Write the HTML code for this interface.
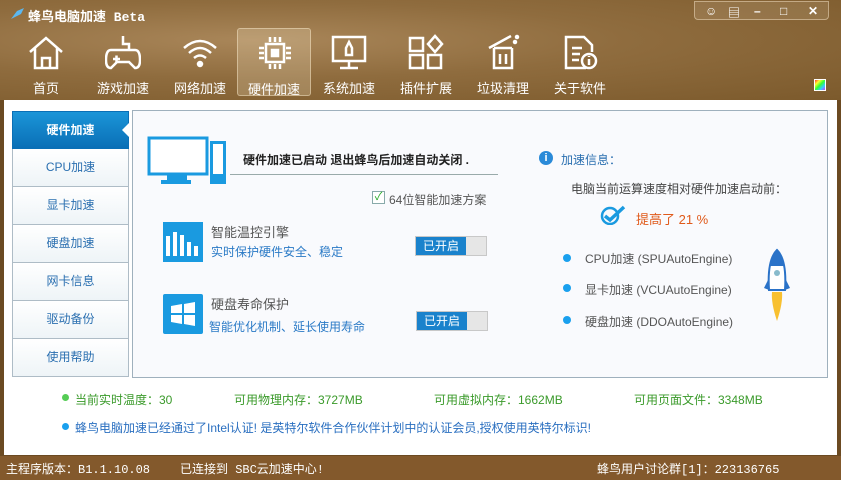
<!DOCTYPE html>
<html><head><meta charset="utf-8"><style>
*{margin:0;padding:0;box-sizing:border-box}
body{width:841px;height:480px;overflow:hidden;background:#6b4a22;font-family:"Liberation Sans","Noto Sans CJK SC",sans-serif;position:relative}
.hdr{position:absolute;left:0;top:0;width:841px;height:100px;background:radial-gradient(ellipse at 30% 40%,#a98659 0%,#8f6c3e 45%,#7c5a2c 100%);}
.title{position:absolute;left:28px;top:6px;color:#fff;font-size:13px;font-weight:bold;font-family:"Liberation Mono","Noto Sans CJK SC",monospace}
.nav{position:absolute;top:28px;width:74px;height:68px;text-align:center;color:#fff;font-size:13px}
.nav svg{position:absolute;left:19px;top:6px}
.nav span{position:absolute;left:0;right:0;top:50px}
.act{background:rgba(255,240,210,.22);border:1px solid rgba(255,240,210,.45);border-radius:3px}
.wb{position:absolute;left:694px;top:1px;width:135px;height:19px;border:1px solid rgba(255,240,210,.45);border-radius:0 0 4px 4px;background:rgba(255,240,210,.12);color:#fff;font-size:12px}
.wb i{position:absolute;top:2px;font-style:normal;font-weight:bold}
.main{position:absolute;left:4px;top:100px;width:833px;height:355px;background:#fff}
.side{position:absolute;left:12px;top:111px;width:117px}
.side div{height:38px;border:1px solid #aebcc6;border-top:none;background:linear-gradient(#fff,#eef4f7);color:#2a6fb0;font-size:12px;text-align:center;line-height:37px}
.side div.on{background:linear-gradient(#1b95d8,#0a6fb6);color:#fff;font-weight:bold;border-color:#0a6fb6;position:relative}
.side div.on:after{content:"";position:absolute;right:-1px;top:11px;border:7px solid transparent;border-right-color:#fff}
.panel{position:absolute;left:132px;top:110px;width:696px;height:268px;border:1px solid #9fb0bd;background:#f9fafd}
.t{position:absolute;font-size:12px;white-space:nowrap}
.tog{position:absolute;width:72px;height:20px;border:1px solid #c8c8c8;background:#e6e6e6}
.tog b{position:absolute;left:0;top:0;width:50px;height:18px;background:#1a82cc;color:#fff;font-weight:normal;font-size:12px;text-align:center;line-height:18px}
.dot{position:absolute;width:8px;height:8px;border-radius:4px;background:#1aa0ee}
.status{position:absolute;left:0;top:456px;width:841px;height:24px;background:#83592c;color:#fff;font-size:12px;font-family:"Liberation Mono","Noto Sans CJK SC",monospace}
</style></head><body>
<div class="hdr"></div>
<svg style="position:absolute;left:9px;top:7px" width="16" height="14"><path d="M2 12 L8 4 L15 1 L12 7 Z" fill="#5cb8f0"/></svg>
<div class="title">蜂鸟电脑加速 Beta</div>
<div class="wb"><i style="left:10px">☺</i><i style="left:33px">▤</i><i style="left:59px">–</i><i style="left:85px">□</i><i style="left:113px">✕</i></div>

<div class="nav" style="left:9px"><svg width="36" height="36" fill="none" stroke="#fff" stroke-width="2.5"><path d="M2 18 L18 4 L34 18 M7 14 V34 H29 V14 M14 34 V24 H22 V34"/></svg><span>首页</span></div>
<div class="nav" style="left:86px"><svg width="36" height="36" fill="none" stroke="#fff" stroke-width="2.5"><path d="M18 2 V10 H24 V16 M6 16 H30 Q35 16 35 26 Q35 34 30 34 L24 28 H12 L6 34 Q1 34 1 26 Q1 16 6 16Z M8 25 H15 M11.5 21.5 V28.5"/></svg><span>游戏加速</span></div>
<div class="nav" style="left:163px"><svg width="36" height="36" fill="none" stroke="#fff" stroke-width="2.5"><path d="M2 14 Q18 0 34 14 M7 19 Q18 9 29 19 M12 24 Q18 19 24 24"/><circle cx="18" cy="30" r="2" fill="#fff"/></svg><span>网络加速</span></div>
<div class="nav act" style="left:237px"><svg width="36" height="36" fill="none" stroke="#fff" stroke-width="2.5"><rect x="9" y="9" width="18" height="18"/><rect x="15" y="15" width="6" height="6" fill="#fff"/><path d="M13 2V7M18 2V7M23 2V7M13 29V34M18 29V34M23 29V34M2 13H7M2 18H7M2 23H7M29 13H34M29 18H34M29 23H34"/></svg><span>硬件加速</span></div>
<div class="nav" style="left:312px"><svg width="36" height="36" fill="none" stroke="#fff" stroke-width="2.5"><rect x="2" y="3" width="32" height="24"/><path d="M18 27V33M9 34H27M18 8 L15 14V21H21V14Z"/></svg><span>系统加速</span></div>
<div class="nav" style="left:389px"><svg width="36" height="36" fill="none" stroke="#fff" stroke-width="2.5"><rect x="2" y="4" width="13" height="13"/><rect x="2" y="21" width="13" height="13"/><rect x="20" y="21" width="13" height="13"/><path d="M27 2 L34 10 L27 18 L20 10Z"/></svg><span>插件扩展</span></div>
<div class="nav" style="left:466px"><svg width="36" height="36" fill="none" stroke="#fff" stroke-width="2.5"><path d="M4 14 L26 2 M9 14 H27 M9 14 V34 H27 V14 M15 20V30M21 20V30"/><circle cx="30" cy="8" r="1" fill="#fff"/><circle cx="32" cy="3" r="1" fill="#fff"/></svg><span>垃圾清理</span></div>
<div class="nav" style="left:543px"><svg width="36" height="36" fill="none" stroke="#fff" stroke-width="2.5"><path d="M24 34 H4 V3 H22 L30 11 V18 M10 14H20M10 20H18M10 26H17"/><circle cx="27" cy="27" r="7"/><path d="M27 25V31M27 22V23"/></svg><span>关于软件</span></div>
<div style="position:absolute;left:814px;top:79px;width:12px;height:12px;border:1px solid #fff;background:linear-gradient(135deg,#f33,#ff3,#3f3,#3cf,#c3f)"></div>

<div class="main"></div>
<div class="side"><div class="on" style="border-top:1px solid #0a6fb6">硬件加速</div><div>CPU加速</div><div>显卡加速</div><div>硬盘加速</div><div>网卡信息</div><div>驱动备份</div><div>使用帮助</div></div>
<div class="panel"></div>
<svg style="position:absolute;left:147px;top:136px" width="82" height="52"><rect x="2" y="2" width="58" height="36" fill="#fff" stroke="#1a9ae0" stroke-width="3"/><rect x="20" y="39" width="20" height="5" fill="#1a9ae0"/><rect x="14" y="44" width="30" height="4" fill="#1a9ae0"/><rect x="63" y="5" width="16" height="43" fill="#1a9ae0"/><rect x="66" y="8" width="10" height="30" fill="#fff"/></svg>
<div class="t" style="left:243px;top:151px;font-weight:bold;color:#222">硬件加速已启动 退出蜂鸟后加速自动关闭 .</div>
<div style="position:absolute;left:230px;top:174px;width:268px;height:1px;background:#9aa"></div>
<div style="position:absolute;left:372px;top:191px;width:13px;height:13px;border:1px solid #8aa;background:#fff;color:#2a2;font-size:11px;line-height:11px;text-align:center">✓</div>
<div class="t" style="left:389px;top:191px;color:#555">64位智能加速方案</div>
<svg style="position:absolute;left:163px;top:222px" width="40" height="40"><rect width="40" height="40" fill="#1a9ae0"/><path d="M5 34V14M12 34V10M19 34V13M26 34V20M33 34V24" stroke="#fff" stroke-width="4"/></svg>
<div class="t" style="left:211px;top:222px;color:#555;font-size:13px">智能温控引擎</div>
<div class="t" style="left:211px;top:243px;color:#2a7ac6">实时保护硬件安全、稳定</div>
<div class="tog" style="left:415px;top:236px"><b>已开启</b></div>
<svg style="position:absolute;left:163px;top:294px" width="40" height="40"><rect width="40" height="40" fill="#1a9ae0" rx="2"/><path d="M8 12L19 10V19H8ZM21 10L32 8V19H21ZM8 21H19V30L8 28ZM21 21H32V32L21 30Z" fill="#fff"/></svg>
<div class="t" style="left:211px;top:294px;color:#555;font-size:13px">硬盘寿命保护</div>
<div class="t" style="left:209px;top:318px;color:#2a7ac6">智能优化机制、延长使用寿命</div>
<div class="tog" style="left:416px;top:311px"><b>已开启</b></div>

<div style="position:absolute;left:539px;top:151px;width:14px;height:14px;border-radius:7px;background:#2a8ad8;color:#fff;font-size:11px;text-align:center;line-height:14px;font-weight:bold">i</div>
<div class="t" style="left:561px;top:151px;color:#2a6fb0">加速信息：</div>
<div class="t" style="left:571px;top:180px;color:#444">电脑当前运算速度相对硬件加速启动前：</div>
<svg style="position:absolute;left:600px;top:205px" width="26" height="20"><circle cx="10" cy="11" r="8" fill="none" stroke="#1a9ae0" stroke-width="2.5"/><path d="M5 11 L10 15 L24 2" fill="none" stroke="#1a9ae0" stroke-width="3.5"/></svg>
<div class="t" style="left:636px;top:209px;color:#e05a1a;font-size:13px">提高了 21 %</div>
<div class="dot" style="left:563px;top:254px"></div><div class="t" style="left:585px;top:250px;color:#555">CPU加速 (SPUAutoEngine)</div>
<div class="dot" style="left:563px;top:284px"></div><div class="t" style="left:585px;top:281px;color:#555">显卡加速 (VCUAutoEngine)</div>
<div class="dot" style="left:563px;top:316px"></div><div class="t" style="left:585px;top:313px;color:#555">硬盘加速 (DDOAutoEngine)</div>
<svg style="position:absolute;left:762px;top:248px" width="30" height="78"><path d="M15 73 Q9 55 10 44 H20 Q21 55 15 73Z" fill="#f8c030"/><path d="M15 2 Q5 12 7 42 H23 Q25 12 15 2Z" fill="#fff" stroke="#2a72c8" stroke-width="2"/><path d="M15 2 Q9 8 8 18 H22 Q21 8 15 2Z" fill="#2a72c8"/><path d="M7 30 L2 40 L7 42ZM23 30 L28 40 L23 42Z" fill="#2a72c8"/><circle cx="15" cy="25" r="3" fill="#8bc"/></svg>

<div style="position:absolute;left:62px;top:394px;width:7px;height:7px;border-radius:4px;background:#5c5"></div>
<div class="t" style="left:75px;top:391px;color:#3a9a2a">当前实时温度：30</div>
<div class="t" style="left:234px;top:391px;color:#3a9a2a">可用物理内存：3727MB</div>
<div class="t" style="left:434px;top:391px;color:#3a9a2a">可用虚拟内存：1662MB</div>
<div class="t" style="left:634px;top:391px;color:#3a9a2a">可用页面文件：3348MB</div>
<div style="position:absolute;left:62px;top:423px;width:7px;height:7px;border-radius:4px;background:#1aa0ee"></div>
<div class="t" style="left:75px;top:419px;color:#2a6fc0">蜂鸟电脑加速已经通过了Intel认证! 是英特尔软件合作伙伴计划中的认证会员,授权使用英特尔标识!</div>

<div class="status"><span style="position:absolute;left:6px;top:4px">主程序版本：B1.1.10.08</span><span style="position:absolute;left:180px;top:4px">已连接到 SBC云加速中心!</span><span style="position:absolute;left:597px;top:4px">蜂鸟用户讨论群[1]：223136765</span></div>
</body></html>
